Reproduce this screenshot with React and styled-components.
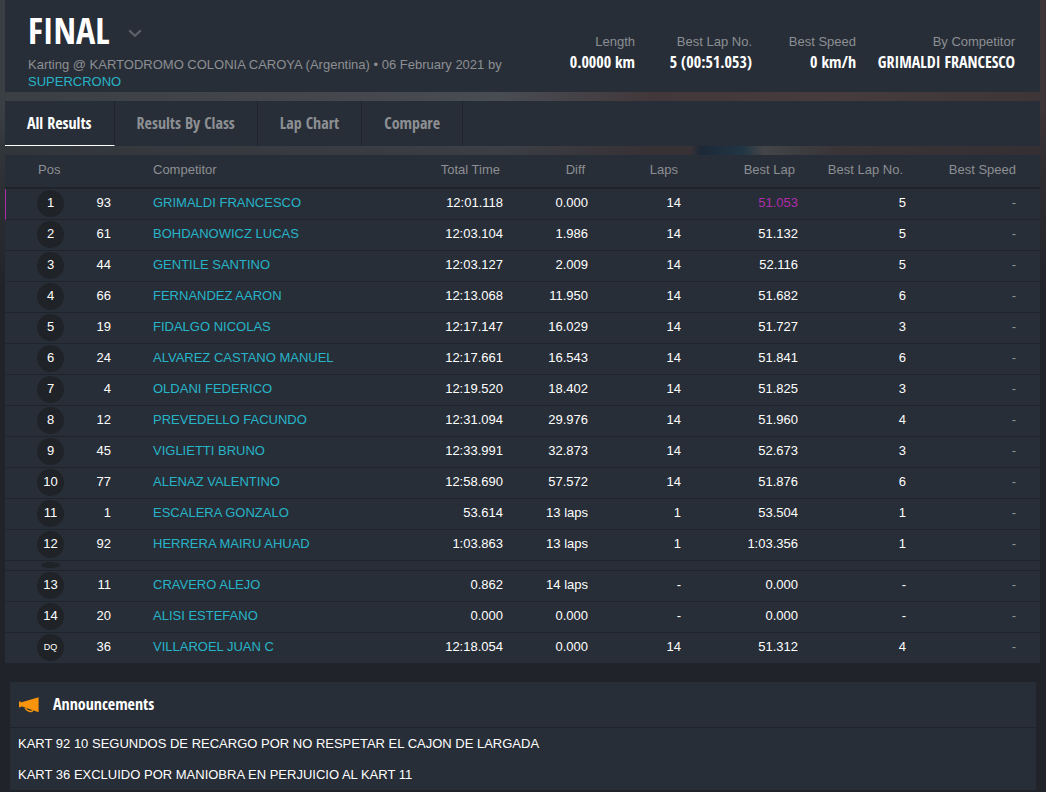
import { useState } from "react";
import styled, { createGlobalStyle } from "styled-components";

const GlobalStyle = createGlobalStyle`
  * {
    box-sizing: border-box;
  }

  body {
    margin: 0;
    min-height: 100vh;
    color: #ffffff;
    font-family: "Liberation Sans", Arial, sans-serif;
    font-size: 13px;
    line-height: 17px;
    background-color: #202329;
    background-image:
      linear-gradient(
        to right,
        transparent 66%,
        #1c2838 67%,
        #213644 71%,
        #434548 73%,
        #3c3c3f 77%,
        transparent 80%
      ),
      linear-gradient(
        to bottom,
        transparent 0,
        transparent 110px,
        rgba(32, 35, 41, 0.4) 160px,
        #202329 290px
      ),
      linear-gradient(
        to right,
        #3a3f43 0,
        #42464b 25%,
        #484c53 48%,
        #42383b 62%,
        #463c3e 80%,
        #3d3537 100%
      );
    background-size: 100% 9px, 100% 100%, 100% 100%;
    background-position: 0 146px, 0 0, 0 0;
    background-repeat: no-repeat;
  }
`;

const Page = styled.main`
  padding: 0 6px 0 5px;
`;

const Header = styled.header`
  display: flex;
  align-items: flex-start;
  padding: 8px 25px 2px 23px;
  background: #282e37;
`;

const HeaderMain = styled.div`
  flex: 1;
`;

const TitleRow = styled.div`
  display: flex;
  align-items: center;
  gap: 18px;
  height: 46px;
`;

const Title = styled.h1`
  margin: 0;
  font: 700 36px/42px "Open Sans Condensed", "Open Sans", sans-serif;
`;

const SessionButton = styled.button`
  display: flex;
  padding: 4px 0 0;
  border: 0;
  background: none;
  color: #5c6066;
  cursor: pointer;
`;

const Subtitle = styled.p`
  margin: 2px 0 0;
  color: #8c8f93;
`;

const TextLink = styled.a`
  color: #26b4c8;
  text-decoration: none;

  &:hover {
    text-decoration: underline;
  }
`;

const Stats = styled.dl`
  display: grid;
  grid-template-columns: auto 97px 84px minmax(139px, auto);
  gap: 20px;
  margin: 0;
  padding-top: 25px;
  text-align: right;
`;

const StatLabel = styled.dt`
  color: #8c8f93;
`;

const StatValue = styled.dd`
  margin: 0;
  font: 700 16px/24px "Open Sans Condensed", "Open Sans", sans-serif;
  white-space: nowrap;
`;

const Tabs = styled.nav`
  display: flex;
  margin-top: 9px;
  background: #282e37;
`;

const Tab = styled.button`
  height: 45px;
  padding: 0 22px;
  border: 0;
  border-right: 1px solid #1f242b;
  border-bottom: 1px solid ${(p) => (p.$active ? "#ffffff" : "transparent")};
  background: none;
  color: ${(p) => (p.$active ? "#ffffff" : "#8c8f93")};
  font: 700 16px/24px "Open Sans Condensed", "Open Sans", sans-serif;
  cursor: pointer;
`;

const Results = styled.table`
  width: 100%;
  margin-top: 9px;
  border-collapse: separate;
  border-spacing: 0;
  table-layout: fixed;
  background: #282e37;
`;

const Col = styled.col`
  width: ${(p) => p.$width};
`;

const HeadCell = styled.th`
  height: 34px;
  padding: 0 3px 4px 0;
  border-bottom: 2px solid #1f242b;
  color: #8c8f93;
  font-weight: 400;
  text-align: right;
`;

const PosHead = styled(HeadCell)`
  padding-left: 33px;
  text-align: left;
`;

const NameHead = styled(HeadCell)`
  padding-left: 42px;
  text-align: left;
`;

const SpeedHead = styled(HeadCell)`
  padding-right: 24px;
`;

const Cell = styled.td`
  height: 31px;
  padding: 0 0 3px;
  border-bottom: 1px solid #1f242b;
  text-align: right;
  color: ${(p) => (p.$best ? "#b02bab" : "#ffffff")};
`;

const PosCell = styled(Cell)`
  padding: 0 0 1px 31px;
  border-left: 1px solid ${(p) => (p.$leader ? "#b02bab" : "transparent")};
`;

const NameCell = styled(Cell)`
  padding-left: 42px;
  text-align: left;
`;

const SpeedCell = styled(Cell)`
  padding-right: 24px;
  color: #8c8f93;
`;

const Row = styled.tr`
  &:last-child > td {
    height: 30px;
    border-bottom: 0;
  }
`;

const Position = styled.span`
  display: block;
  width: 27px;
  height: 27px;
  border-radius: 50%;
  background: #1f2328;
  font-size: ${(p) => (p.$small ? "9px" : "13px")};
  line-height: ${(p) => (p.$small ? "27px" : "25px")};
  text-align: center;
`;

const SpacerCell = styled.td`
  height: 10px;
  padding: 0 0 2px 36px;
  border-bottom: 1px solid #1f242b;
`;

const SpacerMark = styled.span`
  display: block;
  width: 19px;
  height: 6px;
  border-radius: 50%;
  background: #1f2328;
`;

const Announcements = styled.section`
  margin: 19px 4px 2px 5px;
  background: #282e37;
`;

const AnnouncementsHead = styled.div`
  display: flex;
  align-items: center;
  gap: 14px;
  height: 46px;
  padding-left: 9px;
  border-bottom: 1px solid #1f242b;
`;

const AnnouncementsTitle = styled.h2`
  margin: 0;
  padding-bottom: 2px;
  font: 700 16px/24px "Open Sans Condensed", "Open Sans", sans-serif;
`;

const Announcement = styled.p`
  margin: 0;
  padding: 7px 8px;
`;

const ChevronIcon = () => (
  <svg width="14" height="9" viewBox="0 0 14 9" fill="none" aria-hidden="true">
    <path d="M1.2 1.4 7 6.800l5.800-5.400" stroke="currentColor" strokeWidth="2.200" />
  </svg>
);

const MegaphoneIcon = () => (
  <svg width="20" height="16" viewBox="0 0 20 16" aria-hidden="true">
    <path fill="#f7940c" d="M0 4.500h1.800v1L19.600.3v15L2.200 9.300l-.4.900H0z" />
    <path
      d="M6.300 10.800c.5 1.700 1.300 2.600 2.800 3l2.200.6c1.300.3 2.200-.1 2.500-1.300"
      fill="none"
      stroke="#f7940c"
      strokeWidth="1.500"
    />
  </svg>
);

const stats = [
  { label: "Length", value: "0.0000 km" },
  { label: "Best Lap No.", value: "5 (00:51.053)" },
  { label: "Best Speed", value: "0 km/h" },
  { label: "By Competitor", value: "GRIMALDI FRANCESCO" },
];

const tabs = ["All Results", "Results By Class", "Lap Chart", "Compare"];

// pos, kart number, competitor, total time, diff, laps, best lap, best lap no.
const classified = [
  ["1", "93", "GRIMALDI FRANCESCO", "12:01.118", "0.000", "14", "51.053", "5"],
  ["2", "61", "BOHDANOWICZ LUCAS", "12:03.104", "1.986", "14", "51.132", "5"],
  ["3", "44", "GENTILE SANTINO", "12:03.127", "2.009", "14", "52.116", "5"],
  ["4", "66", "FERNANDEZ AARON", "12:13.068", "11.950", "14", "51.682", "6"],
  ["5", "19", "FIDALGO NICOLAS", "12:17.147", "16.029", "14", "51.727", "3"],
  ["6", "24", "ALVAREZ CASTANO MANUEL", "12:17.661", "16.543", "14", "51.841", "6"],
  ["7", "4", "OLDANI FEDERICO", "12:19.520", "18.402", "14", "51.825", "3"],
  ["8", "12", "PREVEDELLO FACUNDO", "12:31.094", "29.976", "14", "51.960", "4"],
  ["9", "45", "VIGLIETTI BRUNO", "12:33.991", "32.873", "14", "52.673", "3"],
  ["10", "77", "ALENAZ VALENTINO", "12:58.690", "57.572", "14", "51.876", "6"],
  ["11", "1", "ESCALERA GONZALO", "53.614", "13 laps", "1", "53.504", "1"],
  ["12", "92", "HERRERA MAIRU AHUAD", "1:03.863", "13 laps", "1", "1:03.356", "1"],
];

const notClassified = [
  ["13", "11", "CRAVERO ALEJO", "0.862", "14 laps", "-", "0.000", "-"],
  ["14", "20", "ALISI ESTEFANO", "0.000", "0.000", "-", "0.000", "-"],
  ["DQ", "36", "VILLAROEL JUAN C", "12:18.054", "0.000", "14", "51.312", "4"],
];

const announcements = [
  "KART 92 10 SEGUNDOS DE RECARGO POR NO RESPETAR EL CAJON DE LARGADA",
  "KART 36 EXCLUIDO POR MANIOBRA EN PERJUICIO AL KART 11",
];

const ResultRow = ({ result }) => {
  const [pos, number, name, total, diff, laps, bestLap, bestLapNo] = result;
  const leader = pos === "1";

  return (
    <Row>
      <PosCell $leader={leader}>
        <Position $small={pos === "DQ"}>{pos}</Position>
      </PosCell>
      <Cell>{number}</Cell>
      <NameCell>
        <TextLink href="#">{name}</TextLink>
      </NameCell>
      <Cell>{total}</Cell>
      <Cell>{diff}</Cell>
      <Cell>{laps}</Cell>
      <Cell $best={leader}>{bestLap}</Cell>
      <Cell>{bestLapNo}</Cell>
      <SpeedCell>-</SpeedCell>
    </Row>
  );
};

const App = () => {
  const [activeTab, setActiveTab] = useState(tabs[0]);

  return (
    <>
      <GlobalStyle />
      <Page>
        <Header>
          <HeaderMain>
            <TitleRow>
              <Title>FINAL</Title>
              <SessionButton type="button" aria-label="Choose session">
                <ChevronIcon />
              </SessionButton>
            </TitleRow>
            <Subtitle>
              Karting @ KARTODROMO COLONIA CAROYA (Argentina) • 06 February 2021 by{" "}
              <TextLink href="#">SUPERCRONO</TextLink>
            </Subtitle>
          </HeaderMain>
          <Stats>
            {stats.map((stat) => (
              <div key={stat.label}>
                <StatLabel>{stat.label}</StatLabel>
                <StatValue>{stat.value}</StatValue>
              </div>
            ))}
          </Stats>
        </Header>

        <Tabs>
          {tabs.map((tab) => (
            <Tab
              key={tab}
              type="button"
              $active={tab === activeTab}
              onClick={() => setActiveTab(tab)}
            >
              {tab}
            </Tab>
          ))}
        </Tabs>

        <Results>
          <colgroup>
            <Col $width="64px" />
            <Col $width="42px" />
            <Col $width="auto" />
            <Col $width="120px" />
            <Col $width="85px" />
            <Col $width="93px" />
            <Col $width="117px" />
            <Col $width="108px" />
            <Col $width="134px" />
          </colgroup>
          <thead>
            <tr>
              <PosHead>Pos</PosHead>
              <HeadCell />
              <NameHead>Competitor</NameHead>
              <HeadCell>Total Time</HeadCell>
              <HeadCell>Diff</HeadCell>
              <HeadCell>Laps</HeadCell>
              <HeadCell>Best Lap</HeadCell>
              <HeadCell>Best Lap No.</HeadCell>
              <SpeedHead>Best Speed</SpeedHead>
            </tr>
          </thead>
          <tbody>
            {classified.map((result) => (
              <ResultRow key={result[0]} result={result} />
            ))}
            <tr>
              <SpacerCell colSpan={9}>
                <SpacerMark />
              </SpacerCell>
            </tr>
            {notClassified.map((result) => (
              <ResultRow key={result[0]} result={result} />
            ))}
          </tbody>
        </Results>

        <Announcements>
          <AnnouncementsHead>
            <MegaphoneIcon />
            <AnnouncementsTitle>Announcements</AnnouncementsTitle>
          </AnnouncementsHead>
          {announcements.map((text) => (
            <Announcement key={text}>{text}</Announcement>
          ))}
        </Announcements>
      </Page>
    </>
  );
};

export default App;
